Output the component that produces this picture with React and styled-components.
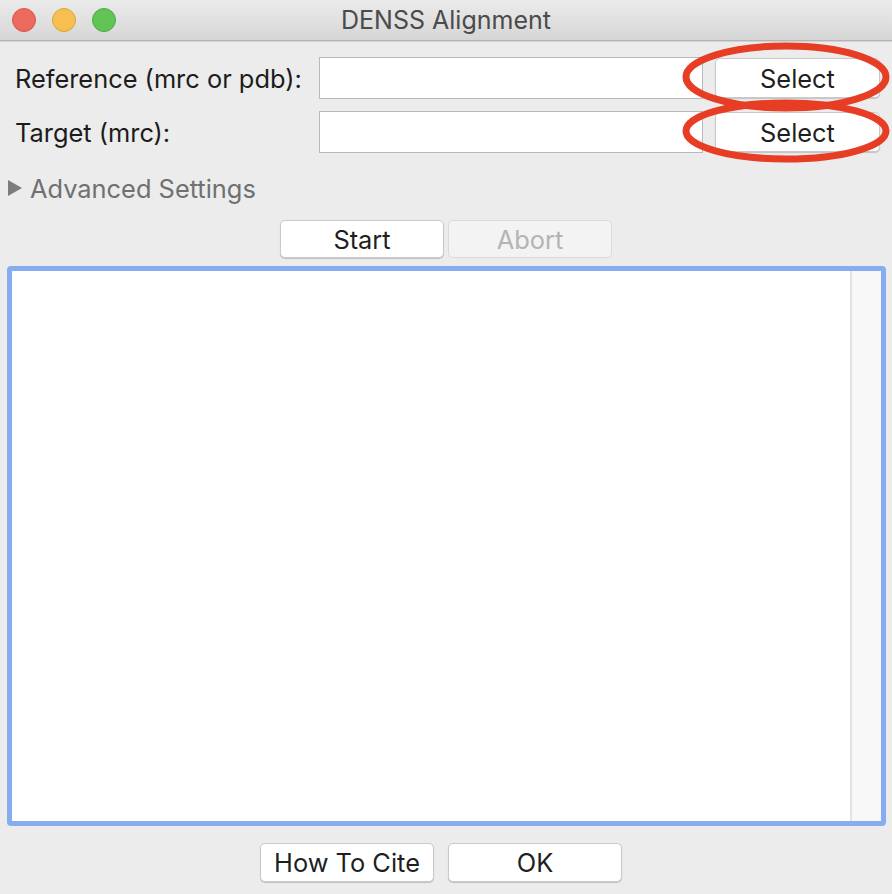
import React from 'react';
import styled, { createGlobalStyle } from 'styled-components';

const GlobalStyle = createGlobalStyle`
  html, body {
    margin: 0;
    padding: 0;
    background: #ececec;
  }
  body {
    font-family: Inter, 'Liberation Sans', Arial, sans-serif;
  }
`;

export default function App() {
  return (
    <Window>
      <GlobalStyle />
      <TitleBar>
        <Lights>
          <Light color="#ec6a5e" edge="#d5544a" />
          <Light color="#f5c04f" edge="#d9a43c" />
          <Light color="#61c454" edge="#4ea943" />
        </Lights>
        <Title>DENSS Alignment</Title>
      </TitleBar>

      <Body>
        <Form>
          <Label>Reference (mrc or pdb):</Label>
          <Field />
          <Button>Select</Button>
          <Label>Target (mrc):</Label>
          <Field />
          <Button>Select</Button>
          <Marks viewBox="0 0 220 130">
            <ellipse cx="103" cy="36" rx="100" ry="31" />
            <ellipse cx="103" cy="90" rx="100" ry="28" />
          </Marks>
        </Form>

        <Disclosure>
          <Triangle />
          <span>Advanced Settings</span>
        </Disclosure>

        <ButtonRow gap={4}>
          <Button wide={164} height={38}>Start</Button>
          <Button wide={164} height={38} disabled>
            Abort
          </Button>
        </ButtonRow>

        <LogBox>
          <LogText />
          <ScrollTrack />
        </LogBox>

        <ButtonRow gap={14} shift={-5}>
          <Button wide={174} height={39}>How To Cite</Button>
          <Button wide={174} height={39}>OK</Button>
        </ButtonRow>
      </Body>
    </Window>
  );
}

const Window = styled.div`
  width: 892px;
  height: 894px;
  background: #ececec;
  display: flex;
  flex-direction: column;
  overflow: hidden;
`;

const TitleBar = styled.div`
  height: 40px;
  display: flex;
  align-items: center;
  position: relative;
  background: linear-gradient(#ebebeb, #d6d6d6);
  border-bottom: 1px solid #b4b4b4;
  box-shadow: 0 1px 0 #d2d2d2;
`;

const Lights = styled.div`
  display: flex;
  gap: 16px;
  padding-left: 12px;
`;

const Light = styled.div`
  width: 24px;
  height: 24px;
  border-radius: 50%;
  background: ${(p) => p.color};
  border: 1px solid ${(p) => p.edge};
  box-sizing: border-box;
`;

const Title = styled.div`
  position: absolute;
  left: 0;
  right: 0;
  text-align: center;
  font-size: 25px;
  color: #4b4b4b;
  pointer-events: none;
`;

const Body = styled.div`
  flex: 1;
  display: flex;
  flex-direction: column;
  padding-top: 16px;
`;

const Form = styled.div`
  position: relative;
  display: grid;
  grid-template-columns: 292px 384px 165px;
  grid-auto-rows: 42px;
  column-gap: 12px;
  row-gap: 12px;
  padding-left: 15px;
  align-items: center;
`;

const Label = styled.div`
  font-size: 25.4px;
  color: #1c1c1c;
  white-space: nowrap;
`;

const Field = styled.div`
  height: 42px;
  background: #fff;
  border: 1px solid #b9b9b9;
  box-sizing: border-box;
`;

const Button = styled.button`
  width: ${(p) => (p.wide ? `${p.wide}px` : 'auto')};
  height: ${(p) => (p.height ? `${p.height}px` : '40px')};
  padding: 0;
  font-family: inherit;
  font-size: 25.4px;
  color: ${(p) => (p.disabled ? '#b4b4b4' : '#1f1f1f')};
  background: ${(p) => (p.disabled ? '#f3f3f3' : '#fff')};
  border: 1px solid ${(p) => (p.disabled ? '#dadada' : '#c9c9c9')};
  border-radius: 5px;
  box-shadow: ${(p) => (p.disabled ? 'none' : '0 1px 1px rgba(0,0,0,0.18)')};
`;

const Marks = styled.svg`
  position: absolute;
  left: 683px;
  top: -16px;
  width: 220px;
  height: 130px;
  overflow: visible;
  fill: none;
  stroke: #e63d24;
  stroke-width: 7;
  pointer-events: none;
`;

const Disclosure = styled.div`
  display: flex;
  align-items: center;
  gap: 8px;
  height: 28px;
  margin-top: 21px;
  padding-left: 8px;
  font-size: 25.4px;
  color: #707070;
`;

const Triangle = styled.div`
  width: 0;
  height: 0;
  border-top: 8px solid transparent;
  border-bottom: 8px solid transparent;
  border-left: 14px solid #7d7d7d;
`;

const ButtonRow = styled.div`
  display: flex;
  justify-content: center;
  gap: ${(p) => p.gap}px;
  margin-top: ${(p) => (p.gap > 10 ? 17 : 18)}px;
  transform: translateX(${(p) => p.shift || 0}px);
`;

const LogBox = styled.div`
  display: flex;
  margin: 8px 6px 0 7px;
  height: 560px;
  box-sizing: border-box;
  border: 5px solid #86adf0;
  border-radius: 4px;
  background: #fff;
`;

const LogText = styled.div`
  flex: 1;
  background: #fff;
`;

const ScrollTrack = styled.div`
  width: 29px;
  background: #f8f8f8;
  border-left: 2px solid #e3e3e3;
`;
